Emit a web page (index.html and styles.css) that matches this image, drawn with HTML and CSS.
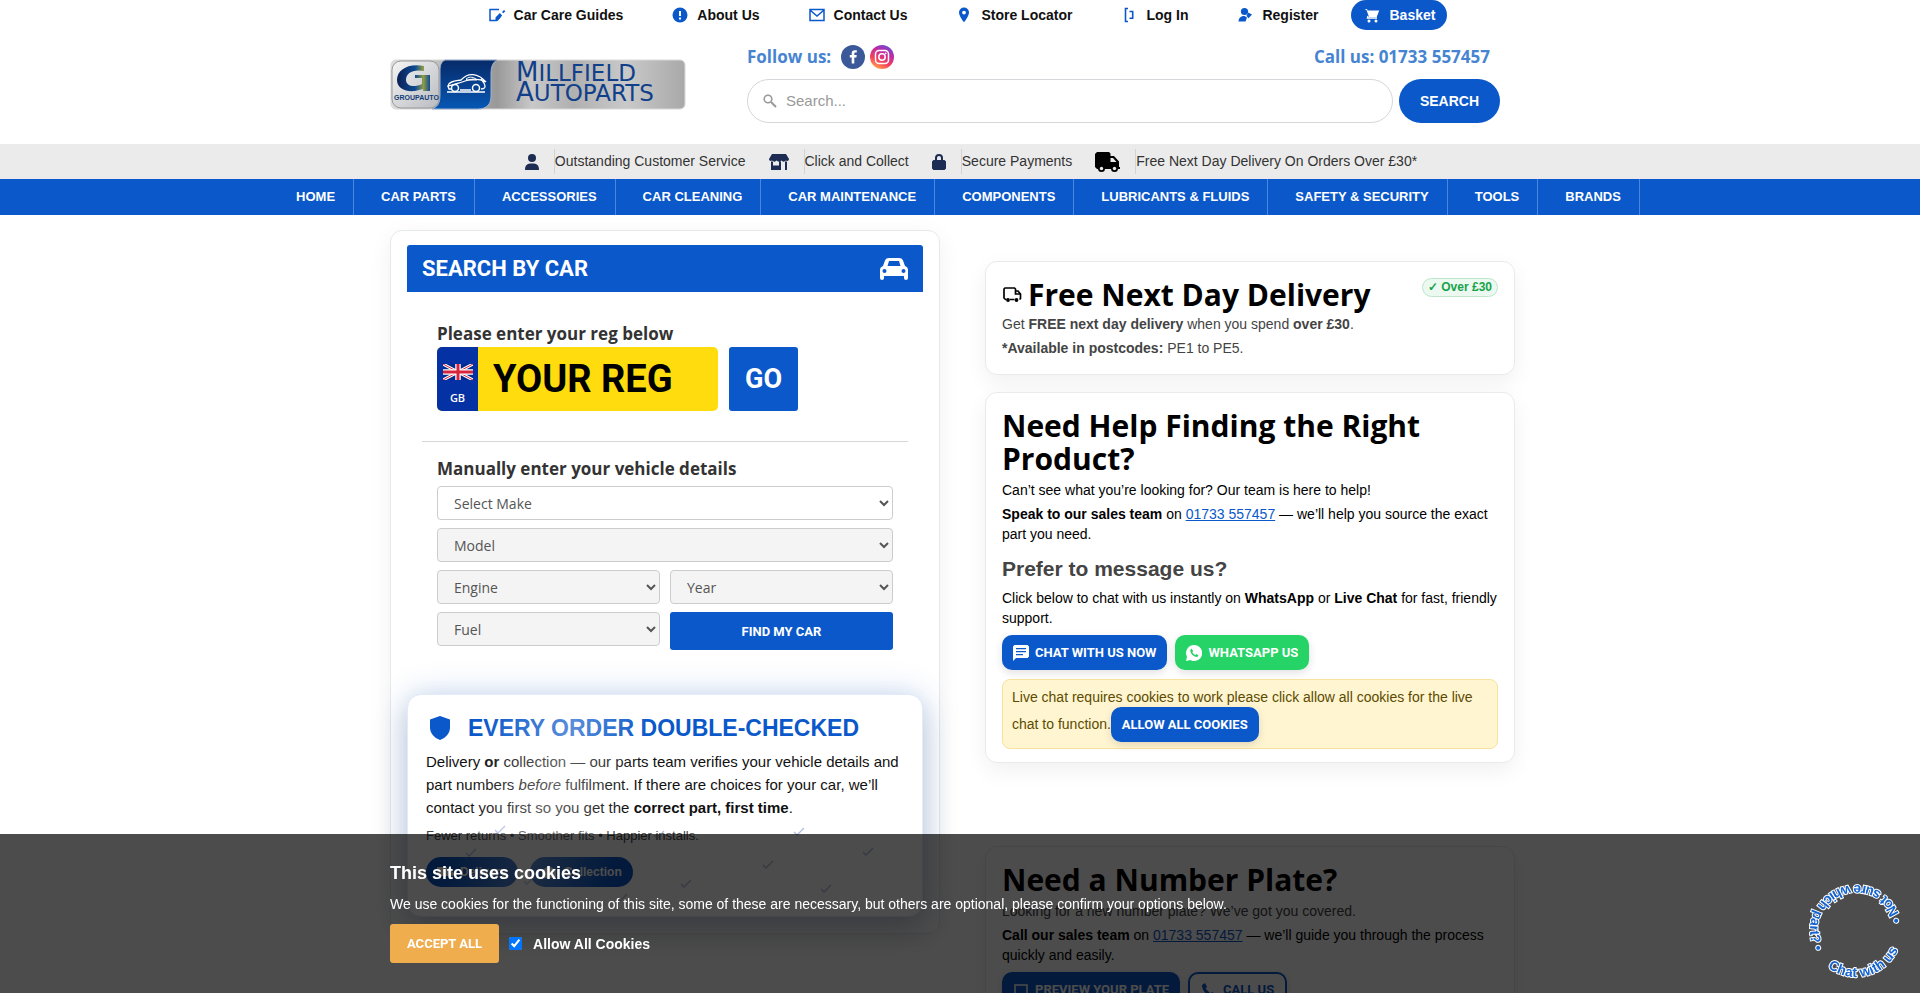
FILE: index.html
```html
<!DOCTYPE html>
<html lang="en">
<head>
<meta charset="utf-8">
<meta name="viewport" content="width=device-width, initial-scale=1">
<title>Millfield Autoparts</title>
<link rel="stylesheet" href="styles.css">
</head>
<body>
<header>
  <nav class="topnav" aria-label="Account">
    <a href="#"><svg class="ti" viewBox="0 0 18 18"><path d="M11 3.500H2V14.500H8.500L12 11" fill="none" stroke="currentColor" stroke-width="1.500"/><path d="M7.500 15v-3.500L11.800 7l2.400 2.400L10 14.500zM14 6l2-2 1.300 1.300-2 2z" fill="currentColor"/></svg>Car Care Guides</a>
    <a href="#"><svg class="ti" viewBox="0 0 18 18"><circle cx="9" cy="9" r="7.500" fill="currentColor"/><path d="M8 5h2v5H8zM8 11.500h2v2H8z" fill="#fff"/></svg>About Us</a>
    <a href="#"><svg class="ti" viewBox="0 0 18 18"><path d="M2 3.500h14v11H2zM2.500 4.500L9 10l6.500-5.500" fill="none" stroke="currentColor" stroke-width="1.500"/></svg>Contact Us</a>
    <a href="#"><svg class="ti" viewBox="0 0 18 18"><path fill-rule="evenodd" d="M9 1.500a5 5 0 0 0-5 5c0 3.700 5 9.800 5 9.800s5-6.100 5-9.800a5 5 0 0 0-5-5zm0 3.200a1.900 1.900 0 1 1 0 3.800 1.900 1.900 0 0 1 0-3.800z" fill="currentColor"/></svg>Store Locator</a>
    <a href="#"><svg class="ti" viewBox="0 0 18 18"><path d="M8 2.500H5.500v13H8M9.500 5.500h3.200v6.800H9.500" fill="none" stroke="currentColor" stroke-width="1.600"/></svg>Log In</a>
    <a href="#"><svg class="ti" viewBox="0 0 18 18"><circle cx="8.500" cy="5.500" r="3.600" fill="currentColor"/><path d="M2.500 15.500c.3-4 2.500-5.500 6-5.500l2.500 1.500-1.500 4zM12 6.500l4 2-3.500 3.700-2-2.200z" fill="currentColor"/></svg>Register</a>
    <a class="basket" href="#"><svg class="ti" viewBox="0 0 18 18"><path d="M1.500 3h2.400l.8 1.600h11.500L13.700 11H6L3.500 4" fill="currentColor"/><path d="M5 10l-.5 2h9.500" fill="none" stroke="currentColor" stroke-width="1.400"/><circle cx="6" cy="15" r="1.500" fill="currentColor"/><circle cx="13" cy="15" r="1.500" fill="currentColor"/></svg>Basket</a>
  </nav>

  <div class="container masthead">
    <a class="logo" href="#" aria-label="Millfield Autoparts home">
      <svg viewBox="0 0 296 51" width="296" height="51">
        <defs>
          <linearGradient id="silver" x1="0" x2="1"><stop offset="0" stop-color="#ddd"/><stop offset=".36" stop-color="#999"/><stop offset=".48" stop-color="#c8c8c8"/><stop offset=".62" stop-color="#b0b0b0"/><stop offset=".8" stop-color="#c9c9c9"/><stop offset="1" stop-color="#a9a9a9"/></linearGradient>
          <linearGradient id="tile" x1="0" y1="0" x2="1" y2="1"><stop offset="0" stop-color="#f5f5f5"/><stop offset="1" stop-color="#b9bbc0"/></linearGradient>
          <linearGradient id="blue" x1="0" y1="0" x2="0" y2="1"><stop offset="0" stop-color="#062a68"/><stop offset="1" stop-color="#0757b4"/></linearGradient>
          <linearGradient id="gee" x1="0" x2="1"><stop offset="0" stop-color="#0b1f55"/><stop offset=".55" stop-color="#0e4a93"/><stop offset=".8" stop-color="#8f9d45"/><stop offset="1" stop-color="#0f4a93"/></linearGradient>
        </defs>
        <rect x="1" y="1" width="294" height="49" rx="5" fill="url(#silver)" stroke="#d8d8d8"/>
        <path d="M55 1H107C102 4 101 9 101 15V37C101 45 97 50 88 50H42C49 47 50 43 50 35V12C50 6 51 3 55 1Z" fill="url(#blue)" stroke="#9fb2cf"/>
        <rect x="2" y="2" width="47" height="47" rx="9" fill="url(#tile)" stroke="#999"/>
        <path d="M34 7C18 4 7 11 7 21c0 8 8 12 18 11l8-2v2h7V16H25v3h7v6c-8 4-16 2-16-4 0-7 7-11 18-9z" fill="url(#gee)"/>
        <text x="4" y="41" class="logo-tiny">GROUPAUTO</text>
        <path d="M58 27c1-5 8-5 13-6 7-8 17-7 25 2-6-3-13-4-21-1-5 2-10 3-17 5zM58 27l1 3h3M70 31h11M91 30c4 0 5-2 3-6l-3-4M57 33h38" fill="none" stroke="#fff" stroke-width="1.300"/>
        <path d="M76 20c4-3 8-2 11 1h-10z" fill="none" stroke="#fff"/>
        <circle cx="65" cy="29" r="3.500" fill="none" stroke="#fff" stroke-width="1.500"/><circle cx="86" cy="29" r="3.500" fill="none" stroke="#fff" stroke-width="1.500"/>
        <text x="126" y="22" class="logo-text"><tspan class="logo-cap">M</tspan>ILLFIELD</text>
        <text x="126" y="42" class="logo-text"><tspan class="logo-cap">A</tspan>UTOPARTS</text>
      </svg>
    </a>
    <div class="head-tools">
      <div class="contact-row">
        <div class="follow"><span>Follow us:</span>
          <a href="#" aria-label="Facebook"><svg viewBox="0 0 24 24" width="24" height="24"><circle cx="12" cy="12" r="12" fill="#3b5998"/><path d="M13.300 18.500v-6h2.100l.3-2.400h-2.400V8.700c0-.8.300-1.200 1.200-1.200h1.300V5.300h-2c-2.100 0-3.100 1.200-3.100 3.100v1.700H8.800v2.400h1.900v6z" fill="#fff"/></svg></a>
          <a href="#" aria-label="Instagram"><svg viewBox="0 0 24 24" width="24" height="24"><defs><linearGradient id="ig" x1=".2" y1="1" x2=".7" y2="0"><stop offset="0" stop-color="#ffb44a"/><stop offset=".35" stop-color="#f5405a"/><stop offset=".7" stop-color="#c32aa3"/><stop offset="1" stop-color="#6a4bd0"/></linearGradient></defs><circle cx="12" cy="12" r="12" fill="url(#ig)"/><g fill="none" stroke="#fff" stroke-width="1.500"><rect x="5.500" y="5.500" width="13" height="13" rx="3.500"/><circle cx="12" cy="12" r="3.200"/></g><circle cx="15.700" cy="8.300" r=".9" fill="#fff"/></svg></a>
        </div>
        <span>Call us: 01733 557457</span>
      </div>
      <form class="search">
        <label class="search-box"><svg viewBox="0 0 14 14" width="14" height="14"><circle cx="5" cy="5" r="3.800" fill="none" stroke="#999" stroke-width="1.600"/><path d="M8 8l5 5" stroke="#999" stroke-width="2"/></svg><input type="search" placeholder="Search..." aria-label="Search"></label>
        <button type="button">SEARCH</button>
      </form>
    </div>
  </div>

  <ul class="usp">
    <li><svg class="person" viewBox="0 0 14 16" width="14" height="16"><circle cx="7" cy="4" r="4"/><path d="M0 16c0-5 2-6.500 7-6.500S14 11 14 16z"/></svg><span>Outstanding Customer Service</span></li>
    <li><svg viewBox="0 0 20 16" width="20" height="16"><path d="M3 0h14l3 5c0 2-2 2.500-3 1.500C15.500 8 13.500 8 12.500 6.500 11 8 9 8 7.500 6.500 6.500 8 4.500 8 3 6.500 2 7.500 0 7 0 5zM2 7.500h2v4h6v-4h2V16H2zM16 7.500h2V16h-2z"/></svg><span>Click and Collect</span></li>
    <li><svg viewBox="0 0 14 16" width="14" height="16"><path fill-rule="evenodd" d="M3 6V4a4 4 0 0 1 8 0v2h1.500L14 7.500v7L12.500 16h-11L0 14.500v-7L1.500 6zm2 0h4V4a2 2 0 0 0-4 0z"/></svg><span>Secure Payments</span></li>
    <li><svg class="truck" viewBox="0 0 25 20" width="25" height="20"><path d="M2 0h12l1.500 1.500V4H19l5 5.500V15h1v2H2L0 15V2z"/><path d="M15.500 6H18l3.500 4h-6z" fill="#ebebeb"/><circle cx="6.500" cy="16.500" r="3.500"/><circle cx="19.500" cy="16.500" r="3.500"/><circle cx="6.500" cy="16.500" r="1.700" fill="#ebebeb"/><circle cx="19.500" cy="16.500" r="1.700" fill="#ebebeb"/></svg><span>Free Next Day Delivery On Orders Over £30*</span></li>
  </ul>

  <nav class="mainnav" aria-label="Departments">
    <a href="#">HOME</a><a href="#">CAR PARTS</a><a href="#">ACCESSORIES</a><a href="#">CAR CLEANING</a><a href="#">CAR MAINTENANCE</a><a href="#">COMPONENTS</a><a href="#">LUBRICANTS &amp; FLUIDS</a><a href="#">SAFETY &amp; SECURITY</a><a href="#">TOOLS</a><a href="#">BRANDS</a>
  </nav>
</header>

<main class="container columns">
  <section class="finder">
    <div class="finder-head"><h2>SEARCH BY CAR</h2>
      <svg viewBox="0 0 28 22" width="28" height="22"><path fill="#fff" fill-rule="evenodd" d="M9 0h10c2 0 3.300.8 4 2.500L25 8c2 .8 3 2 3 4v8a2 2 0 0 1-4 0v-2H4v2a2 2 0 0 1-4 0v-8c0-2 1-3.200 3-4l2-5.500C5.700.8 7 0 9 0zm0 3L7.500 8h13L19 3zM4.500 11a2 2 0 1 0 0 4 2 2 0 0 0 0-4zm19 0a2 2 0 1 0 0 4 2 2 0 0 0 0-4z"/></svg>
    </div>
    <form class="finder-body">
      <div class="reg-block">
        <label class="field-title" for="reg">Please enter your reg below</label>
        <div class="reg-row">
          <div class="plate">
            <div class="plate-country"><svg viewBox="0 0 30 16" width="30" height="16"><path fill="#012a8c" d="M0 0h30v16H0z"/><path d="M0 0l30 16M30 0L0 16" stroke="#fff" stroke-width="3"/><path d="M0 0l30 16M30 0L0 16" stroke="#d8233c" stroke-width="1"/><path d="M15 0v16M0 8h30" stroke="#fff" stroke-width="5.500"/><path d="M15 0v16M0 8h30" stroke="#d8233c" stroke-width="3"/></svg><span>GB</span></div>
            <input id="reg" type="text" placeholder="YOUR REG">
          </div>
          <button type="button" class="go">GO</button>
        </div>
      </div>
      <fieldset class="manual">
        <legend class="field-title">Manually enter your vehicle details</legend>
        <div class="manual-grid">
          <select class="wide" aria-label="Make"><option>Select Make</option></select>
          <select class="wide idle" aria-label="Model"><option>Model</option></select>
          <select class="idle" aria-label="Engine"><option>Engine</option></select>
          <select class="idle" aria-label="Year"><option>Year</option></select>
          <select class="idle" aria-label="Fuel"><option>Fuel</option></select>
          <button type="button" class="find">FIND MY CAR</button>
        </div>
      </fieldset>
    </form>

    <article class="checked">
      <h2><svg viewBox="0 0 20 24" width="20" height="24"><path d="M10 0l10 3.500v8C20 17 16 22 10 24 4 22 0 17 0 11.500v-8z" fill="#0a58ca"/></svg>EVERY ORDER DOUBLE-CHECKED</h2>
      <p>Delivery <b>or</b> collection — our parts team verifies your vehicle details and part numbers <i>before</i> fulfilment. If there are choices for your car, we’ll contact you first so you get the <b>correct part, first time</b>.</p>
      <p class="note">Fewer returns • Smoother fits • Happier installs.</p>
      <div class="tags">
        <span><svg viewBox="0 0 16 12" width="16" height="12"><path d="M0 1h10v2h3l3 3v4H0z" fill="currentColor"/></svg>Delivery</span>
        <span><svg viewBox="0 0 16 12" width="16" height="12"><path d="M8 0l7 4v8H1V4z" fill="currentColor"/></svg>Collection</span>
      </div>
      <svg class="ticks" viewBox="0 0 514 220" aria-hidden="true"><defs><path id="tk" d="M0 4l3 3 7-7" fill="none" stroke="#7d93cf" stroke-width="1.300"/></defs><use href="#tk" x="87" y="131"/><use href="#tk" x="246" y="136"/><use href="#tk" x="386" y="133"/><use href="#tk" x="58" y="154"/><use href="#tk" x="455" y="153"/><use href="#tk" x="355" y="166"/><use href="#tk" x="273" y="185"/><use href="#tk" x="413" y="190"/><use href="#tk" x="116" y="182"/><use href="#tk" x="209" y="199"/></svg>
    </article>
  </section>

  <div class="side">
    <section class="card delivery">
      <div class="card-head">
        <h2><svg viewBox="0 0 20 18" width="20" height="18"><path d="M4.500 13.500H3.500L2 12V3l1-1h9.500l1 1v2h2.500l2.500 3v4.500l-1 1M8 13.500h4.500M13.500 5v3H18" fill="none" stroke="#000" stroke-width="1.700"/><circle cx="6" cy="14" r="1.900"/><circle cx="14.500" cy="14" r="1.900"/></svg>Free Next Day Delivery</h2>
        <span class="badge">✓ Over £30</span>
      </div>
      <p>Get <b>FREE next day delivery</b> when you spend <b>over £30</b>.</p>
      <p><b>*Available in postcodes:</b> PE1 to PE5.</p>
    </section>

    <section class="card help">
      <h2>Need Help Finding the Right Product?</h2>
      <p>Can’t see what you’re looking for? Our team is here to help!</p>
      <p><b>Speak to our sales team</b> on <a href="#">01733 557457</a> — we’ll help you source the exact part you need.</p>
      <h3>Prefer to message us?</h3>
      <p>Click below to chat with us instantly on <b>WhatsApp</b> or <b>Live Chat</b> for fast, friendly support.</p>
      <div class="actions">
        <button type="button" class="btn"><svg viewBox="0 0 16 16" width="16" height="16"><path fill="#fff" fill-rule="evenodd" d="M1.500 0h13L16 1.500v10L14.500 13H3l-3 3V1.500zM3 3v1.200h10V3zm0 3v1.200h10V6zm0 3v1.200h7V9z"/></svg>CHAT WITH US NOW</button>
        <button type="button" class="btn green"><svg viewBox="0 0 16 16" width="16" height="16"><path fill="#fff" d="M8 0a8 8 0 0 0-7 11.800L0 16l4.300-1A8 8 0 1 0 8 0z"/><path fill="#25d366" d="M5.500 3.500L4.300 5c0 4 3.500 7 7 7l1.200-1.600-2.200-1.400-1 1C8 9.600 6.800 8.300 6.300 7l.9-1z"/></svg>WHATSAPP US</button>
      </div>
      <div class="notice">Live chat requires cookies to work please click allow all cookies for the live chat to function.<button type="button" class="btn">ALLOW ALL COOKIES</button></div>
    </section>

    <section class="card number">
      <h2>Need a Number Plate?</h2>
      <p class="soft">Looking for a new number plate? We’ve got you covered.</p>
      <p><b>Call our sales team</b> on <a href="#">01733 557457</a> — we’ll guide you through the process quickly and easily.</p>
      <div class="actions">
        <button type="button" class="btn"><svg viewBox="0 0 16 16" width="16" height="16"><path d="M2 3h12v9H2z" fill="none" stroke="#fff" stroke-width="1.500"/></svg>PREVIEW YOUR PLATE</button>
        <button type="button" class="btn outline"><svg viewBox="0 0 16 16" width="16" height="16"><path d="M4 1l2 4-1.500 1.500 5 5L11 10l4 2-2 3C7 15 1 9 1 3z" fill="currentColor"/></svg>CALL US</button>
      </div>
    </section>
  </div>
</main>

<aside class="cookies" aria-label="Cookies">
  <div class="container">
    <h2>This site uses cookies</h2>
    <p>We use cookies for the functioning of this site, some of these are necessary, but others are optional, please confirm your options below.</p>
    <div class="cookie-row"><button type="button">ACCEPT ALL</button><input type="checkbox" id="allow" checked><label for="allow">Allow All Cookies</label></div>
  </div>
</aside>

<a class="chat-ring" href="#" aria-label="Not sure which part? Chat with us">
  <svg viewBox="0 0 120 120" width="120" height="120">
    <defs><path id="ring" d="M106 60A46 46 0 0 0 14 60A46 46 0 0 0 106 60"/></defs>
    <text><textPath href="#ring" startOffset="9">• Not sure which part? •</textPath></text>
    <text><textPath href="#ring" startOffset="186">Chat with us</textPath></text>
  </svg>
</a>
</body>
</html>
```
FILE: styles.css
```css
:root {
  --blue: #0a58ca;
  --narrow: Roboto, "Liberation Sans", sans-serif;
  --open: "Open Sans", sans-serif;
}
* { box-sizing: border-box; }
html { scrollbar-width: none; }
body { margin: 0; background: #fff; color: #111; font: 14px/20px "Liberation Sans", Arial, sans-serif; }
a { color: inherit; text-decoration: none; }
h2, h3, p, ul { margin: 0; padding: 0; }
button, input, select { font: inherit; }
button { border: 0; color: #fff; background: var(--blue); cursor: pointer; }
.container { max-width: 1140px; margin: 0 auto; }

.topnav { display: flex; justify-content: center; gap: 24px; padding-left: 3px; font-weight: 700; }
.topnav a { display: flex; align-items: center; gap: 8px; height: 30px; padding: 0 12px; border-radius: 15px; }
.ti { width: 18px; height: 18px; color: var(--blue); }
.topnav .basket { margin-left: -3px; background: var(--blue); color: #fff; }
.basket .ti { color: #fff; }

.masthead { display: flex; justify-content: space-between; align-items: center; padding: 15px 30px 21px 0; }
.logo svg { display: block; }
.logo-text { font: 23px "DejaVu Sans", sans-serif; fill: #10408a; }
.logo-cap { font-size: 26px; }
.logo-tiny { font: bold 7px "Liberation Sans", sans-serif; fill: #123d77; }
.head-tools { flex: 0 1 753px; }
.contact-row { display: flex; justify-content: space-between; align-items: center; padding-right: 10px; color: #4684d2; font: 700 17px/24px var(--open); }
.follow { display: flex; gap: 5px; }
.follow span { margin-right: 5px; }
.follow svg { display: block; }
.search { display: flex; gap: 6px; margin-top: 10px; }
.search-box { flex: 1; display: flex; align-items: center; gap: 7px; height: 44px; padding: 0 15px; border: 1px solid #d5d7da; border-radius: 22px; }
.search-box input { flex: 1; border: 0; outline: 0; font-size: 15px; background: none; }
.search-box input::placeholder { color: #999; }
.search button { padding: 0 21px; border-radius: 22px; font-weight: 700; }

.usp { display: flex; justify-content: center; gap: 23px; height: 35px; padding: 5px 0 0 22px; list-style: none; background: #ebebeb; color: #333; }
.usp li { display: flex; align-items: center; gap: 15px; height: 25px; }
.usp svg { fill: #1c2c52; }
.usp .truck { fill: #000; }
.usp span { padding: 2px 0 3px; border-left: 1px solid #d3d3d3; }

.mainnav { display: flex; justify-content: center; padding-right: 11px; background: var(--blue); color: #fff; font: 700 13px/36px "Liberation Sans", sans-serif; }
.mainnav a { padding: 0 18px 0 27px; border-right: 1px solid #4a86de; white-space: nowrap; }

.columns { display: grid; grid-template-columns: 550fr 530fr; gap: 45px; align-items: start; padding: 15px 15px 0 0; }
.finder { padding: 14px 16px 16px; border: 1px solid #e6e9ec; border-radius: 12px; box-shadow: 0 6px 24px rgba(0, 0, 0, .06); }
.finder-head { display: flex; justify-content: space-between; align-items: center; height: 47px; padding: 0 15px; border-radius: 3px 3px 0 0; background: var(--blue); color: #fff; }
.finder-head h2 { font: 700 22px/30px var(--narrow); }
.finder-body { padding: 30px 15px 44px; }
.reg-block { padding: 0 15px 30px; border-bottom: 1px solid #d5d8da; }
.field-title { display: block; margin-bottom: 1px; padding: 0; color: #333; font: 700 17px/24px var(--open); }
.reg-row { display: flex; gap: 11px; }
.plate { display: flex; width: 281px; height: 64px; overflow: hidden; border-radius: 5px; background: #ffdc0d; }
.plate-country { display: flex; flex-direction: column; align-items: center; gap: 10px; width: 41px; padding-top: 17px; background: #0431a3; color: #fff; font: 600 11px/16px var(--open); }
.plate input { flex: 1; min-width: 0; padding: 0 15px; border: 0; background: none; font: 700 38px var(--narrow); }
.plate input::placeholder { color: #000; opacity: 1; }
.go { width: 69px; border-radius: 3px; font: 700 27px var(--narrow); }
.manual { margin: 0; padding: 15px 15px 0; border: 0; }
.manual legend { float: left; width: 100%; margin-bottom: 5px; }
.manual-grid { clear: both; display: grid; grid-template-columns: 1fr 1fr; gap: 8px 10px; align-items: start; }
.manual select { height: 34px; padding: 0 0 0 12px; border: 1px solid #ccc; border-radius: 4px; background: #fff; color: #555; font: 14px var(--open); }
.manual .wide { grid-column: span 2; }
.manual .idle { background: #f4f4f4; }
.find { height: 38px; border-radius: 3px; font: 700 13px var(--narrow); }

.checked { position: relative; padding: 19px 18px 29px; border: 1px solid #e3eaf8; border-radius: 14px; background: #fff; box-shadow: 0 0 32px rgba(10, 88, 202, .22), 0 14px 30px rgba(0, 0, 0, .14); }
.checked::after { content: ""; position: absolute; inset: 0; border-radius: 14px; background: linear-gradient(105deg, transparent 14%, rgba(255, 255, 255, .32) 30%, transparent 44%); pointer-events: none; }
.checked h2 { display: flex; align-items: center; gap: 18px; padding-left: 4px; color: var(--blue); font-size: 23px; line-height: 28px; }
.checked p { margin-top: 8px; font-size: 15px; line-height: 23px; }
.checked .note { margin-top: 5px; color: #444; font-size: 13px; }
.tags { display: flex; gap: 12px; margin-top: 10px; }
.tags span { display: flex; align-items: center; gap: 7px; height: 30px; padding: 0 11px; border-radius: 15px; background: var(--blue); color: #fff; font-size: 12px; font-weight: 700; }
.ticks { position: absolute; inset: 0; width: 100%; opacity: .6; pointer-events: none; }

.side { display: grid; gap: 17px; padding-top: 31px; }
.card { padding: 16px 16px 13px; border: 1px solid #e8eaec; border-radius: 12px; background: #fff; color: #000; box-shadow: 0 8px 22px rgba(0, 0, 0, .06); }
.card h2 { font: 700 30px/33px var(--open); margin-bottom: 5px; }
.card p + p { margin-top: 4px; }
.card p a { color: var(--blue); text-decoration: underline; }
.card h3 { margin: 13px 0 8px; color: #444; font-size: 21px; line-height: 23px; }
.delivery { padding-bottom: 16px; }
.delivery p { color: #444; }
.delivery h2 { display: flex; align-items: center; gap: 6px; margin-bottom: 3px; }
.card-head { display: flex; justify-content: space-between; align-items: start; }
.badge { padding: 0 5px; border: 1px solid #bfe6cd; border-radius: 10px; background: #ebf9f0; color: #16a34a; font: 700 12px/17px "Liberation Sans", sans-serif; }
.actions { display: flex; gap: 8px; margin-top: 7px; }
.btn { display: inline-flex; align-items: center; gap: 6px; height: 35px; padding: 0 11px; border-radius: 10px; font: 700 13px/20px var(--narrow); box-shadow: 0 3px 8px rgba(0, 0, 0, .12); }
.green { background: #25d366; }
.outline { border: 2px solid var(--blue); background: #fff; color: var(--blue); }
.notice { margin-top: 9px; padding: 7px 9px 6px; border: 1px solid #f7e29a; border-radius: 8px; background: #fff5d1; color: #5c4b00; }
.number { margin-top: 66px; }
.soft { color: #444; }

.cookies { position: fixed; inset: auto 0 0; min-height: 159px; padding-top: 28px; background: rgba(0, 0, 0, .7); color: #fff; }
.cookies h2 { font-size: 18px; line-height: 22px; }
.cookies p { margin-top: 10px; }
.cookie-row { display: flex; align-items: center; margin-top: 10px; font-weight: 700; }
.cookie-row button { height: 39px; margin-right: 10px; padding: 0 17px; border-radius: 3px; background: #f0ad4e; font: 700 13px var(--narrow); }
.cookie-row input { margin: 0 11px 0 0; }
.chat-ring { position: fixed; right: 4px; bottom: 2px; }
.chat-ring svg { display: block; }
.chat-ring text { font: bold 14px "Liberation Sans", sans-serif; fill: #1463cf; stroke: #fff; stroke-width: 2px; paint-order: stroke; }
```
